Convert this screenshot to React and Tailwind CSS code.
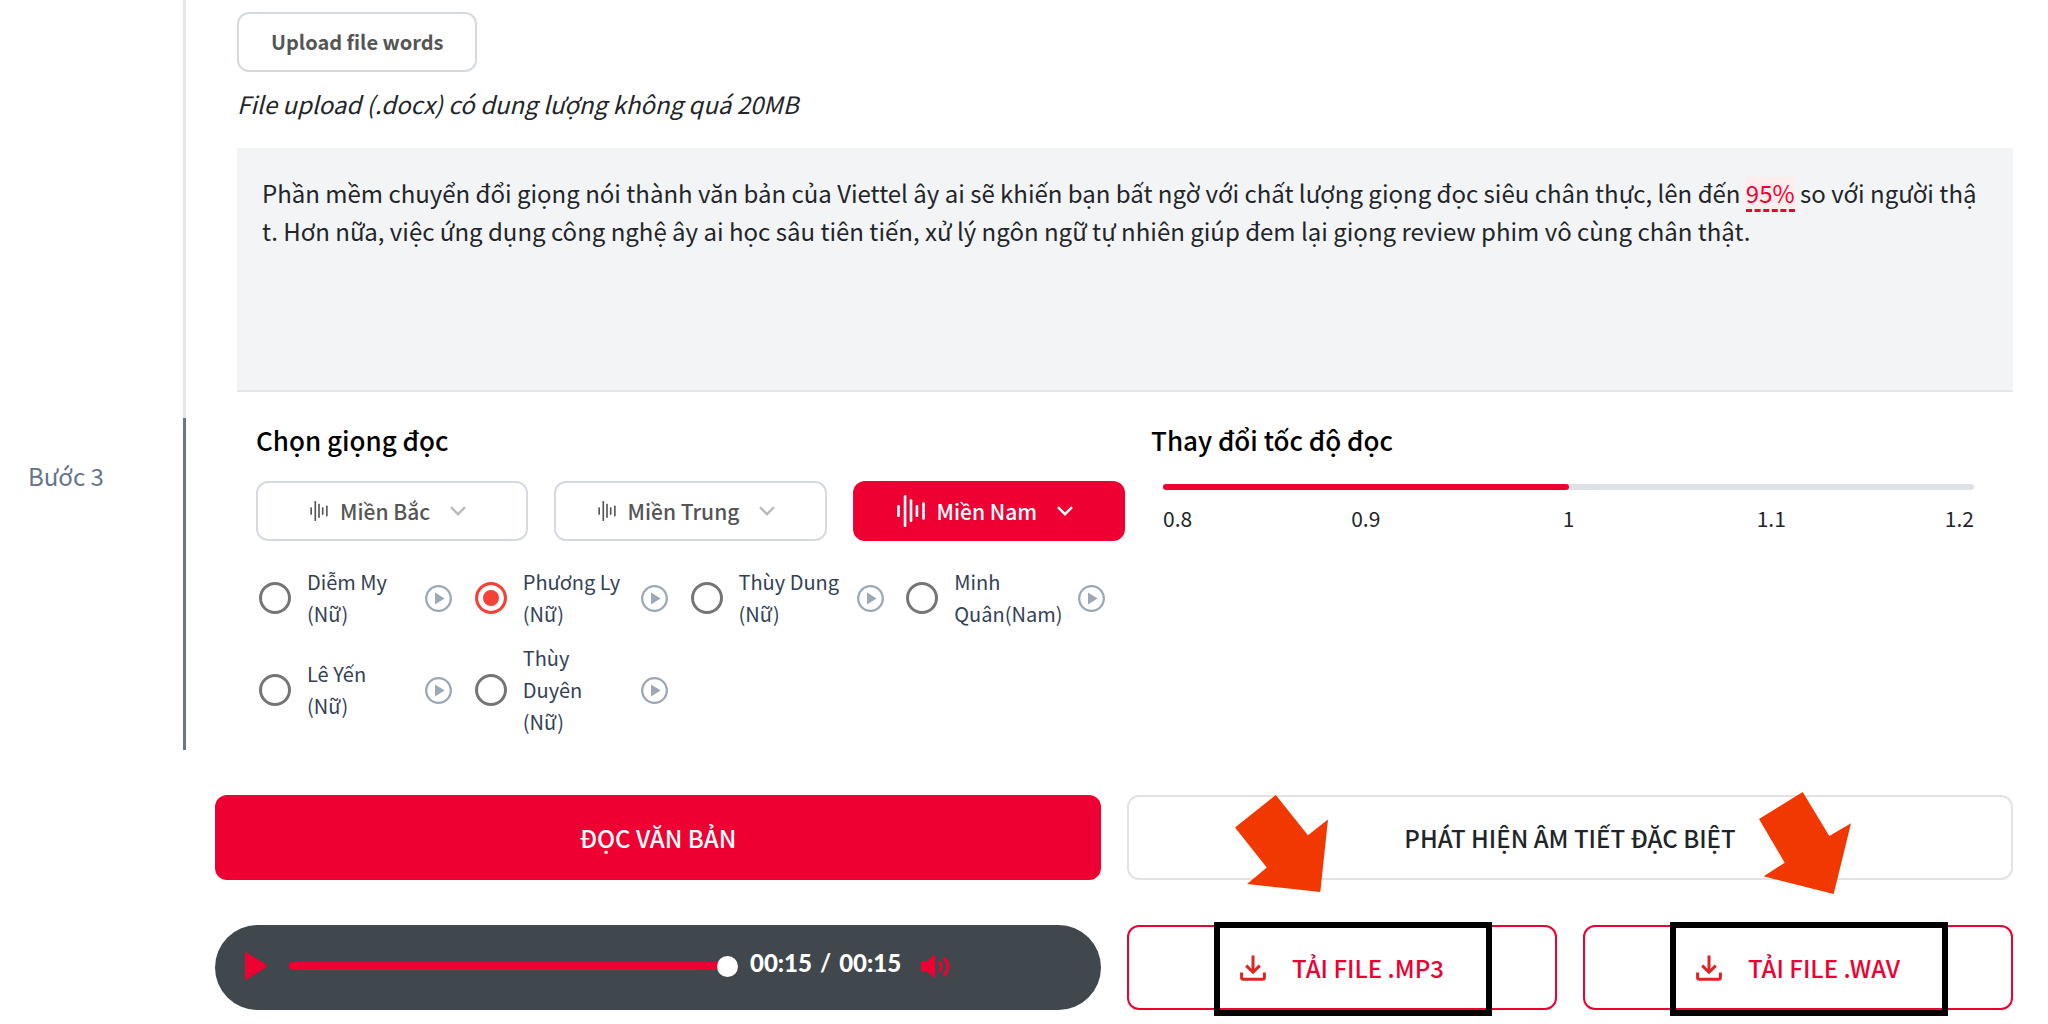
import React, { useState } from 'react';

const regions = [
  { id: 'bac', name: 'Miền Bắc' },
  { id: 'trung', name: 'Miền Trung' },
  { id: 'nam', name: 'Miền Nam' },
];

const voices = [
  { id: 'diem-my', name: 'Diễm My (Nữ)' },
  { id: 'phuong-ly', name: 'Phương Ly (Nữ)' },
  { id: 'thuy-dung', name: 'Thùy Dung (Nữ)' },
  { id: 'minh-quan', name: 'Minh Quân(Nam)' },
  { id: 'le-yen', name: 'Lê Yến (Nữ)' },
  { id: 'thuy-duyen', name: 'Thùy Duyên (Nữ)' },
];

const WaveIcon = ({ className }) => (
  <svg viewBox="0 0 84 97" fill="currentColor" className={className} aria-hidden="true">
    <rect x="0" y="30" width="8" height="37" rx="3" />
    <rect x="20" y="0" width="8" height="97" rx="3" />
    <rect x="38" y="13" width="8" height="69" rx="3" />
    <rect x="56" y="30" width="8" height="37" rx="3" />
    <rect x="76" y="22" width="8" height="53" rx="3" />
  </svg>
);

const ChevronIcon = ({ className }) => (
  <svg viewBox="0 0 16 10" fill="none" stroke="currentColor" strokeWidth="2.4" className={className} aria-hidden="true">
    <path d="M1 1.2 8 8.2 15 1.2" />
  </svg>
);

const PlayCircleIcon = () => (
  <svg viewBox="0 0 27 27" className="w-[27px] h-[27px]" aria-hidden="true">
    <circle cx="13.5" cy="13.5" r="12.3" fill="none" stroke="#9aa8b8" strokeWidth="2.3" />
    <path d="M10 7.6 19.6 13.5 10 19.4Z" fill="#9aa8b8" />
  </svg>
);

const DownloadIcon = () => (
  <svg viewBox="0 0 26 26" fill="none" stroke="#e02424" strokeWidth="3" className="w-[26px] h-[26px]" aria-hidden="true">
    <path d="M13 0.5V17" />
    <path d="M6.2 10.6 13 17.2 19.8 10.6" />
    <path d="M1.6 17.5V22.4Q1.6 24.2 3.4 24.2H22.6Q24.4 24.2 24.4 22.4V17.5" />
  </svg>
);

const DownloadButton = ({ label }) => (
  <div className="relative">
    <button className="w-full h-[85px] flex items-center justify-center gap-[26px] border-2 border-[#ee0033] rounded-xl bg-white text-[#ee0033] font-medium">
      <DownloadIcon />
      {label}
    </button>
    {/* Black frame around the label */}
    <div className="absolute left-[87px] right-[65px] -top-[3px] -bottom-[6px] border-6 border-black pointer-events-none" />
  </div>
);

const App = () => {
  const [region, setRegion] = useState('nam');
  const [voice, setVoice] = useState('phuong-ly');
  const [speed, setSpeed] = useState(1);
  const [time, setTime] = useState(15);

  const speedPercent = ((speed - 0.8) / 0.4) * 100;

  return (
    <div className="min-h-screen bg-white text-[#212529] text-[24px] leading-9 font-['Noto_Sans_CJK_SC','Noto_Sans',sans-serif]">
      {/* Step 2: upload + text */}
      <section className="flex">
        <div className="w-[186px] shrink-0 border-r-[3px] border-[#e4e6ec]" />
        <div className="flex-1 min-w-0 pl-[51px] pr-[35px] pt-3 pb-[26px]">
          <button className="h-[60px] px-8 border-2 border-[#d5dae1] rounded-xl text-[20px] font-bold text-[#555]">
            Upload file words
          </button>
          <p className="mt-[14px] italic">File upload (.docx) có dung lượng không quá 20MB</p>
          <div
            className="mt-[26px] h-[244px] pt-[26px] pl-[25px] pr-[32px] bg-[#f3f4f6] border-b-2 border-[#e5e7ef] leading-[38px] break-all outline-none"
            contentEditable
            suppressContentEditableWarning
            role="textbox"
            aria-label="Văn bản"
            spellCheck={false}
          >
            Phần mềm chuyển đổi giọng nói thành văn bản của Viettel ây ai sẽ khiến bạn bất ngờ với chất lượng giọng đọc siêu chân thực, lên đến{' '}
            <span className="inline-block leading-8 bg-[#ffecec] text-[#ee0033] border-b-[3px] border-dashed border-[#ee0033]">95%</span>
            {' '}so với người thật. Hơn nữa, việc ứng dụng công nghệ ây ai học sâu tiên tiến, xử lý ngôn ngữ tự nhiên giúp đem lại giọng review phim vô cùng chân thật.
          </div>
        </div>
      </section>

      {/* Step 3: voice + speed */}
      <section className="flex">
        <div className="w-[186px] shrink-0 border-r-[3px] border-[#6b7785] pl-7 pt-10 text-[#64748b]">Bước 3</div>
        <div className="flex-1 min-w-0 pl-[51px] pr-[35px] pt-[2px] pb-3 grid grid-cols-2">
          <div className="pl-[19px]">
            <h2 className="text-[26px] leading-10 font-medium text-black">Chọn giọng đọc</h2>
            <div className="mt-[21px] grid grid-cols-3 gap-[26px]">
              {regions.map((r) => {
                const active = r.id === region;
                return (
                  <button
                    key={r.id}
                    onClick={() => setRegion(r.id)}
                    className={`h-[60px] pr-2 flex items-center justify-center rounded-xl text-[21px] font-medium ${
                      active ? 'bg-[#ee0033] text-white' : 'bg-white text-[#555] border-2 border-[#d5dae1]'
                    }`}
                  >
                    <WaveIcon className={active ? 'w-7 h-8' : 'w-[18px] h-5'} />
                    <span className="ml-3 mr-5">{r.name}</span>
                    <ChevronIcon className={active ? 'w-4 h-[10px]' : 'w-4 h-[10px] text-[#bbb]'} />
                  </button>
                );
              })}
            </div>
            <div className="mt-[25px] mx-[3px] grid grid-cols-4 gap-y-3">
              {voices.map((v) => (
                <div key={v.id} className="flex items-center">
                  <input
                    type="radio"
                    name="voice"
                    id={v.id}
                    checked={voice === v.id}
                    onChange={() => setVoice(v.id)}
                    className="appearance-none w-8 h-8 shrink-0 rounded-full border-3 border-[#757575] bg-white checked:border-[#f44336] checked:bg-[#f44336] checked:shadow-[inset_0_0_0_5px_white]"
                  />
                  <label htmlFor={v.id} className="ml-4 mr-4 w-[102px] min-w-min shrink-0 text-[20px] leading-8 text-[#334155]">
                    {v.name}
                  </label>
                  <button aria-label={`Nghe thử ${v.name}`}>
                    <PlayCircleIcon />
                  </button>
                </div>
              ))}
            </div>
          </div>

          <div className="pl-[26px]">
            <h2 className="text-[26px] leading-10 font-medium text-black">
              <label htmlFor="speed">Thay đổi tốc độ đọc</label>
            </h2>
            <div className="mt-6 ml-3 mr-[39px]">
              <div className="relative h-[6px] rounded-full bg-[#dee2e6]">
                <div className="h-full rounded-full bg-[#ee0033]" style={{ width: `${speedPercent}%` }} />
                <input
                  id="speed"
                  type="range"
                  min="0.8"
                  max="1.2"
                  step="0.1"
                  value={speed}
                  onChange={(e) => setSpeed(Number(e.target.value))}
                  className="absolute inset-0 w-full h-full opacity-0 cursor-pointer"
                />
              </div>
              <div className="mt-3 flex text-[21px] leading-8">
                <span className="w-1/8">0.8</span>
                <span className="w-1/4 text-center">0.9</span>
                <span className="w-1/4 text-center">1</span>
                <span className="w-1/4 text-center">1.1</span>
                <span className="w-1/8 text-right">1.2</span>
              </div>
            </div>
          </div>
        </div>
      </section>

      {/* Actions */}
      <section className="pl-[215px] pr-[35px] pt-[45px] grid grid-cols-2 gap-x-[26px] gap-y-[45px]">
        <button className="h-[85px] rounded-xl bg-[#ee0033] text-white font-medium">ĐỌC VĂN BẢN</button>

        <div className="relative">
          <button className="w-full h-[85px] rounded-xl border-2 border-[#e2e2e2] bg-white font-medium">
            PHÁT HIỆN ÂM TIẾT ĐẶC BIỆT
          </button>
          <svg viewBox="375 45 278 290" className="absolute left-[108px] top-0 w-[93px] h-[97px] pointer-events-none" aria-hidden="true">
            <path d="M630 335 653 118 593 165 497 45 375 142 470 262 411 311Z" fill="#f03800" />
          </svg>
          <svg viewBox="567 36 276 306" className="absolute left-[632px] -top-[3px] w-[92px] h-[102px] pointer-events-none" aria-hidden="true">
            <path d="M791 342 843 130 778 168 698 36 567 117 644 248 581 289Z" fill="#f03800" />
          </svg>
        </div>

        <div className="h-[85px] pl-[30px] pb-[3px] flex items-center rounded-full bg-[#41484d]">
          <button aria-label="Phát">
            <svg viewBox="0 0 22 28" className="w-[22px] h-7" aria-hidden="true">
              <path d="M0 1Q0 -0.5 1.6 0.4L21.2 12.6Q22.6 14 21.2 15.2L1.6 27.6Q0 28.5 0 27Z" fill="#ee0033" />
            </svg>
          </button>
          <input
            type="range"
            aria-label="Vị trí phát"
            min="0"
            max="15"
            value={time}
            onChange={(e) => setTime(Number(e.target.value))}
            className="ml-[22px] w-[449px] h-2 appearance-none rounded-full bg-[#ee0033] [&::-webkit-slider-thumb]:appearance-none [&::-webkit-slider-thumb]:w-[21px] [&::-webkit-slider-thumb]:h-[21px] [&::-webkit-slider-thumb]:rounded-full [&::-webkit-slider-thumb]:bg-white"
          />
          <div className="ml-3 pb-[6px] flex gap-2 font-['Lato','Noto_Sans',sans-serif] font-black text-white">
            <span>00:{String(time).padStart(2, '0')}</span>
            <span className="font-bold">/</span>
            <span>00:15</span>
          </div>
          <button aria-label="Âm lượng" className="ml-5">
            <svg viewBox="0 0 29 23" className="w-[29px] h-[23px]" aria-hidden="true">
              <path d="M0 7.2Q0 6.2 1 6.2H6L12.6 0.6Q14.2 -0.4 14.2 1.4V21.4Q14.2 23.4 12.6 22.2L6 16.4H1Q0 16.4 0 15.4Z" fill="#ee0033" />
              <path d="M18.2 6.6Q22.6 11.4 18.2 16.6M22.6 2.8Q31.6 11.4 22.6 20.6" fill="none" stroke="#ee0033" strokeWidth="3" />
            </svg>
          </button>
        </div>

        <div className="grid grid-cols-2 gap-[26px]">
          <DownloadButton label="TẢI FILE .MP3" />
          <DownloadButton label="TẢI FILE .WAV" />
        </div>
      </section>
    </div>
  );
};

export default App;
